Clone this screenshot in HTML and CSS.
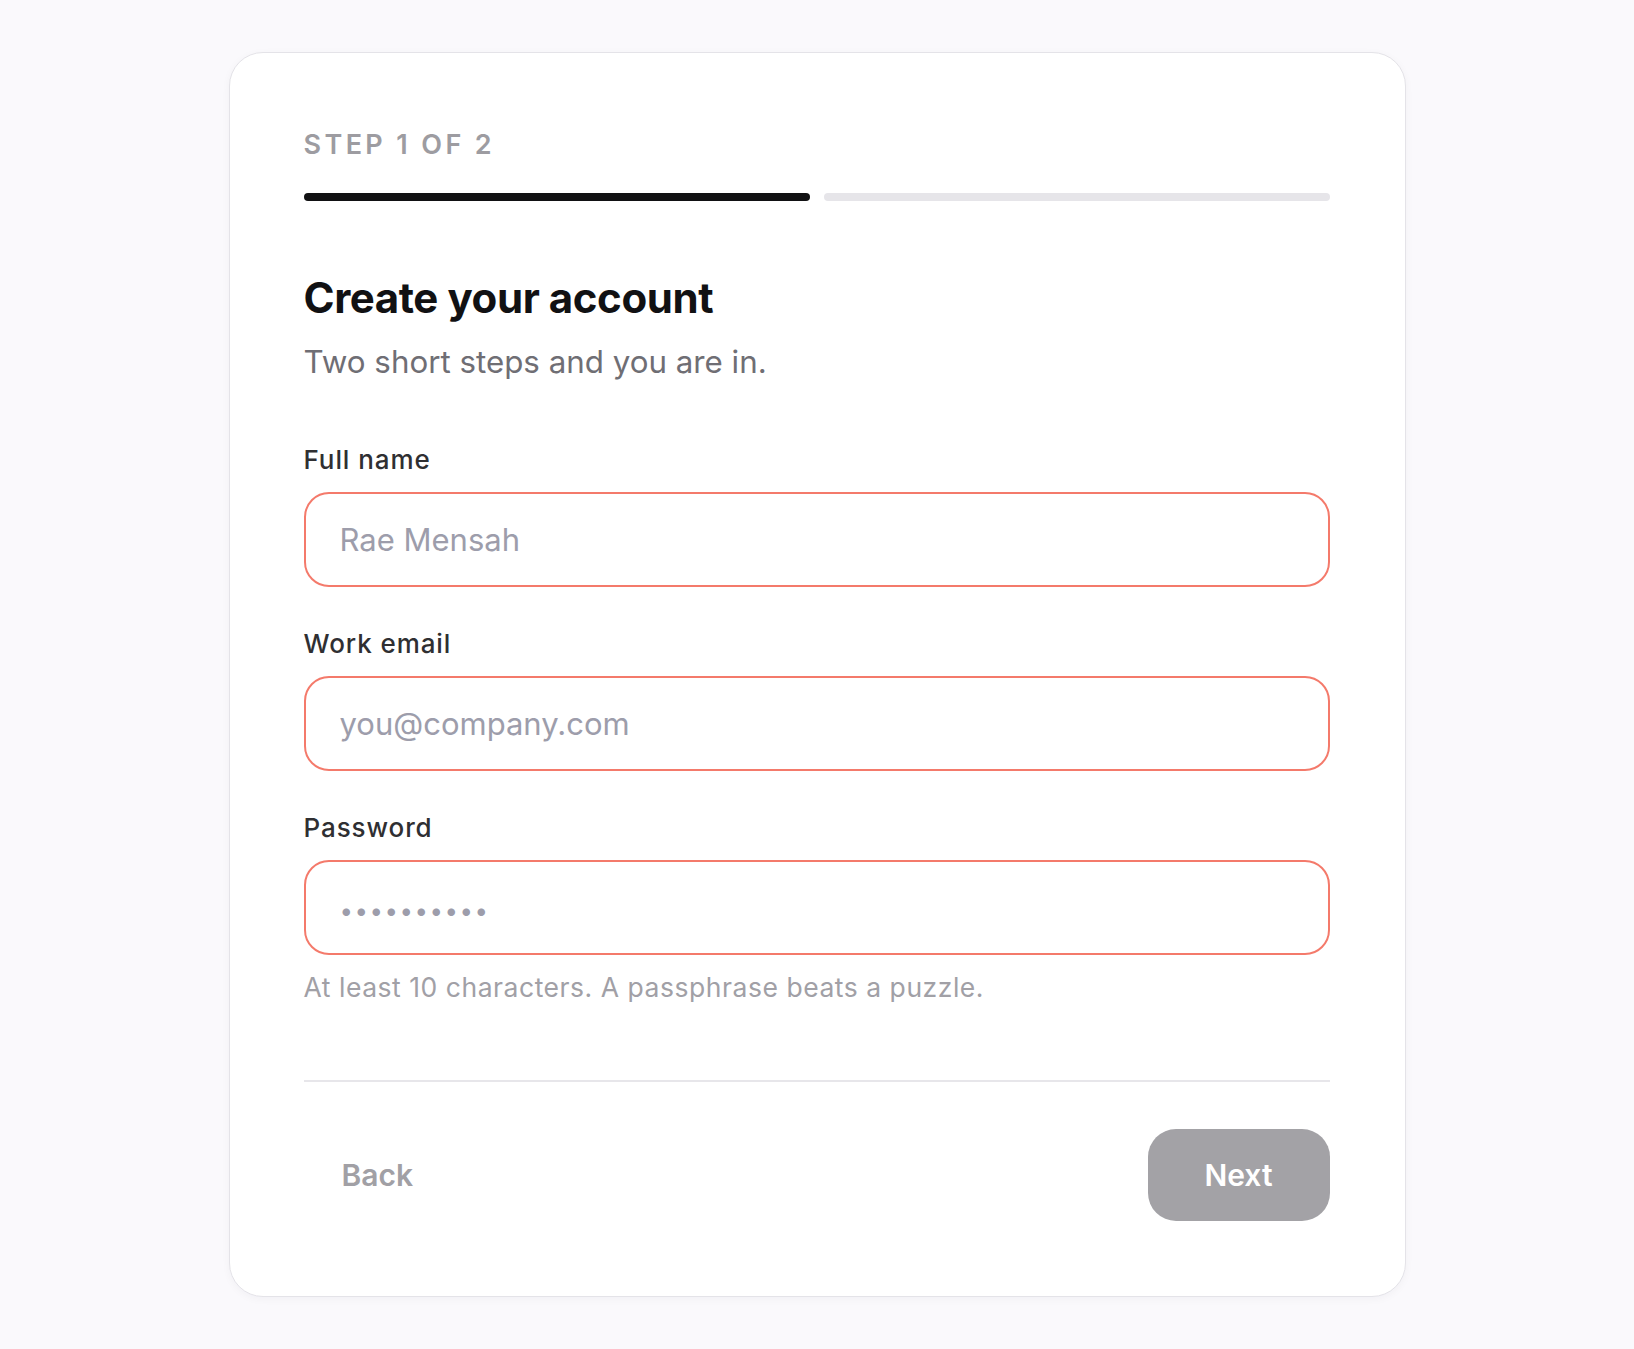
FILE: index.html
```html
<!DOCTYPE html>
<html lang="en">
<head>
<meta charset="utf-8">
<title>Create your account</title>
<link rel="stylesheet" href="styles.css">
</head>
<body>
<main class="card">
  <div class="step-label">STEP 1 OF 2</div>
  <div class="progress">
    <span class="seg seg-done"></span>
    <span class="seg"></span>
  </div>
  <h1 class="title">Create your account</h1>
  <p class="subtitle">Two short steps and you are in.</p>

  <form class="form">
    <div class="field">
      <label class="label" for="name">Full name</label>
      <input class="input" id="name" type="text" placeholder="Rae Mensah">
    </div>
    <div class="field">
      <label class="label" for="email">Work email</label>
      <input class="input" id="email" type="email" placeholder="you@company.com">
    </div>
    <div class="field">
      <label class="label" for="pw">Password</label>
      <input class="input input-pw" id="pw" type="password" placeholder="••••••••••">
      <p class="hint">At least 10 characters. A passphrase beats a puzzle.</p>
    </div>
  </form>

  <div class="divider"></div>

  <div class="actions">
    <button class="btn btn-back" type="button">Back</button>
    <button class="btn btn-next" type="button">Next</button>
  </div>
</main>
</body>
</html>
```
FILE: styles.css
```css
* { box-sizing: border-box; }

html, body {
  margin: 0;
  padding: 0;
}

body {
  background: #faf9fc;
  font-family: Inter, "Noto Sans", "Liberation Sans", sans-serif;
  min-height: 100vh;
  padding-top: 52px;
}

.card {
  width: 1177px;
  margin: 0 auto;
  background: #ffffff;
  border: 1px solid #e4e3e8;
  border-radius: 34px;
  box-shadow: 0 2px 8px rgba(30, 20, 60, 0.04);
  padding: 75px 75px 75px 74px;
  display: flex;
  flex-direction: column;
}

.step-label {
  font-size: 27px;
  line-height: 34px;
  font-weight: 600;
  letter-spacing: 0.125em;
  color: #9d9ca1;
}

.progress {
  display: flex;
  gap: 14px;
  margin-top: 31px;
}

.seg {
  flex: 1;
  height: 8px;
  border-radius: 4px;
  background: #e6e5e9;
}

.seg-done {
  background: #111113;
}

.title {
  margin: 72px 0 0;
  font-size: 42px;
  line-height: 50px;
  font-weight: 700;
  letter-spacing: -0.01em;
  color: #111113;
}

.subtitle {
  margin: 19px 0 0;
  font-size: 31.3px;
  line-height: 40px;
  font-weight: 400;
  color: #6f6e74;
}

.form {
  display: flex;
  flex-direction: column;
  gap: 41px;
  margin-top: 62px;
}

.field {
  display: flex;
  flex-direction: column;
}

.label {
  font-size: 26px;
  line-height: 32px;
  font-weight: 500;
  letter-spacing: 0.035em;
  color: #2f2f32;
}

.input {
  margin-top: 16px;
  height: 95px;
  width: 100%;
  border: 2px solid #f47a6b;
  border-radius: 25px;
  background: #ffffff;
  padding: 0 34px;
  font-family: inherit;
  font-size: 31px;
  letter-spacing: 0;
  color: #2b2b2e;
  outline: none;
}

.input::placeholder {
  color: #9d9dab;
}

.input-pw::placeholder {
  font-size: 24px;
  letter-spacing: 1.5px;
  color: #9d9dab;
}

.hint {
  margin: 16px 0 0;
  font-size: 26.5px;
  line-height: 32px;
  letter-spacing: 0.02em;
  color: #a1a0a6;
}

.divider {
  height: 2px;
  background: #e7e6ea;
  margin-top: 77px;
}

.actions {
  display: flex;
  justify-content: space-between;
  align-items: center;
  margin-top: 47px;
}

.btn {
  height: 92px;
  border: none;
  font-family: inherit;
  font-size: 30px;
  font-weight: 600;
  cursor: pointer;
}

.btn-back {
  background: transparent;
  color: #a1a0a5;
  padding: 0 38px;
}

.btn-next {
  width: 182px;
  background: #a3a2a6;
  color: #ffffff;
  border-radius: 28px;
}
```
